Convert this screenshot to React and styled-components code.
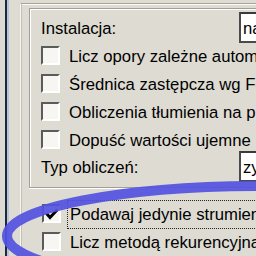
import React from "react";
import styled, { createGlobalStyle } from "styled-components";

const GlobalStyle = createGlobalStyle`
  html, body {
    margin: 0;
    padding: 0;
    background: #dedbd3;
  }
  body {
    font-family: "Liberation Sans", Arial, sans-serif;
    font-size: 16.7px;
    color: #000;
  }
`;

const Screen = styled.div`
  position: relative;
  width: 256px;
  height: 256px;
  overflow: hidden;
  padding-left: 5px;
  box-sizing: border-box;
  background: #dedbd3;
`;

const WindowEdge = styled.div`
  height: 100%;
  border-left: 2px solid #1c2a3f;
  box-sizing: border-box;
`;

const WindowBody = styled.div`
  height: 100%;
  border-left: 2px solid #b6c4d6;
  padding: 3px 0 0 11px;
  box-sizing: border-box;
`;

const Page = styled.div`
  height: 100%;
  border-left: 1px solid #f6f5f1;
  border-top: 1px solid #a9a59d;
  box-shadow: inset 1px 0 0 #c4c0b8, inset 0 1px 0 #fbfaf7;
  padding: 4px 0 0 8px;
  box-sizing: border-box;
`;

const GroupBox = styled.div`
  border: 1px solid #a29e96;
  border-right: none;
  box-shadow: inset 1px 1px 0 #ffffff, 0 1px 0 #ffffff;
  padding: 3px 0 5px 11px;
  display: flex;
  flex-direction: column;
`;

const FieldRow = styled.div`
  display: flex;
  align-items: center;
  justify-content: space-between;
  height: 31px;
  margin-top: ${(p) => p.$top || 0}px;
  white-space: nowrap;
`;

const Label = styled.span`
  padding-top: 2px;
`;

const Input = styled.div`
  flex: none;
  width: 60px;
  margin-right: -43px;
  height: 31px;
  box-sizing: border-box;
  background: #fff;
  border: 2px solid #4a4a4a;
  border-right: none;
  border-top-color: #3a3a3a;
  padding: 4px 0 0 2px;
  line-height: 22px;
  overflow: hidden;
`;

const CheckRow = styled.div`
  display: flex;
  align-items: flex-start;
  height: ${(p) => p.$h || 28}px;
  white-space: nowrap;
`;

const Box = styled.div`
  flex: none;
  width: 19px;
  height: 19px;
  box-sizing: border-box;
  margin-top: 3px;
  margin-right: 6px;
  background: #f7f6f2;
  border-top: 2px solid #5b5b5b;
  border-left: 2px solid #5b5b5b;
  border-right: 2px solid #ffffff;
  border-bottom: 2px solid #ffffff;
  display: flex;
  align-items: center;
  justify-content: center;
`;

const CheckText = styled.span`
  height: 26px;
  line-height: 26px;
  padding: 0 2px;
  margin-top: -1px;
  border: 1px dotted ${(p) => (p.$focus ? "#222" : "transparent")};
  border-right: none;
  padding-top: 1px;
`;

const Outside = styled.div`
  display: flex;
  flex-direction: column;
  padding: 13px 0 0 13px;
`;

const Ring = styled.svg`
  position: absolute;
  left: 0;
  top: 0;
  pointer-events: none;
`;

const Check = () => (
  <svg width="14" height="12" viewBox="0 0 14 12">
    <path d="M1.5 5.5 L5 9.5 L12.5 1.5" fill="none" stroke="#000" strokeWidth="3" />
  </svg>
);

const Item = ({ text, checked, focus, h }) => (
  <CheckRow $h={h}>
    <Box>{checked && <Check />}</Box>
    <CheckText $focus={focus}>{text}</CheckText>
  </CheckRow>
);

export default function App() {
  return (
    <>
      <GlobalStyle />
      <Screen>
        <WindowEdge>
          <WindowBody>
            <Page>
              <GroupBox>
                <FieldRow>
                  <Label>Instalacja:</Label>
                  <Input>na</Input>
                </FieldRow>
                <Item text="Licz opory zależne automatycznie" />
                <Item text="Średnica zastępcza wg Forchheimera" />
                <Item text="Obliczenia tłumienia na przewodach" />
                <Item text="Dopuść wartości ujemne" h={22} />
                <FieldRow $top={2}>
                  <Label>Typ obliczeń:</Label>
                  <Input>zy</Input>
                </FieldRow>
              </GroupBox>
              <Outside>
                <Item text="Podawaj jedynie strumienie" checked focus />
                <Item text="Licz metodą rekurencyjną" />
              </Outside>
            </Page>
          </WindowBody>
        </WindowEdge>
        <Ring width="256" height="256" viewBox="0 0 256 256">
          <ellipse
            cx="262"
            cy="236"
            rx="255"
            ry="50"
            fill="none"
            stroke="#5252e0"
            strokeOpacity="0.92"
            strokeWidth="10"
          />
        </Ring>
      </Screen>
    </>
  );
}
